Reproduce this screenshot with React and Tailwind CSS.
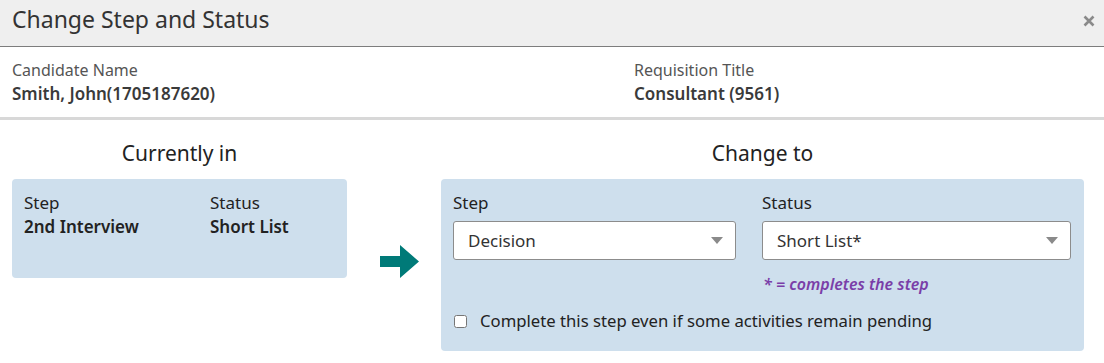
import React, { useState } from "react";

const Caret = () => (
  <svg width="12" height="7" viewBox="0 0 12 7" className="shrink-0">
    <path d="M0 0 H12 L6 7 Z" fill="#8a8a8a" />
  </svg>
);

const SelectBox = ({ value, className }) => (
  <div
    className={`h-[39px] flex items-center justify-between pl-[14px] pr-[12px] bg-white border border-[#8c8c8c] rounded-[3px] text-[17px] text-[#333] ${className}`}
  >
    <span>{value}</span>
    <Caret />
  </div>
);

const App = () => {
  const [pending, setPending] = useState(false);

  return (
    <div className="w-[1104px] h-[363px] bg-white text-[#333] font-['Noto_Sans',sans-serif] overflow-hidden">
      {/* header */}
      <div className="h-[47px] flex items-center justify-between pl-3 pr-[9px] bg-[#efefef] border-b border-[#7d7d7d]">
        <h1 className="text-[23px] leading-[30px] text-[#333] -mt-[9px]">Change Step and Status</h1>
        <button className="w-[12px] h-[12px] -mt-[4px]">
          <svg width="12" height="12" viewBox="0 0 12 12">
            <path d="M1.5 1.5 L10.5 10.5 M10.5 1.5 L1.5 10.5" stroke="#8a8a8a" strokeWidth="2.6" />
          </svg>
        </button>
      </div>

      {/* candidate info */}
      <div className="flex pt-[13px] pb-[11px] border-b-[3px] border-[#d8d8d8]">
        <div className="w-[634px] pl-3">
          <div className="text-[16px] leading-[20px] text-[#555]">Candidate Name</div>
          <div className="mt-[2px] text-[17px] leading-[24px] font-semibold text-[#3a3a3a]">Smith, John(1705187620)</div>
        </div>
        <div>
          <div className="text-[16px] leading-[20px] text-[#555]">Requisition Title</div>
          <div className="mt-[2px] text-[17px] leading-[24px] font-semibold text-[#3a3a3a]">Consultant (9561)</div>
        </div>
      </div>

      {/* step change */}
      <div className="flex pt-[20px] pl-3">
        <div className="w-[335px]">
          <h2 className="text-center text-[21px] leading-[26px] text-[#222] mb-[13px]">Currently in</h2>
          <div className="h-[99px] bg-[#cedfed] rounded-[4px] flex pl-3 pt-3 text-[17px] leading-[24px] text-[#222]">
            <div className="w-[186px]">
              <div>Step</div>
              <div className="font-semibold">2nd Interview</div>
            </div>
            <div>
              <div>Status</div>
              <div className="font-semibold">Short List</div>
            </div>
          </div>
        </div>

        <div className="w-[94px] pt-[105px] pl-[33px]">
          <svg width="39" height="33" viewBox="0 0 39 33">
            <path d="M0 11 H20 V0 L39 16.5 L20 33 V22 H0 Z" fill="#007a78" />
          </svg>
        </div>

        <div className="w-[643px]">
          <h2 className="text-center text-[21px] leading-[26px] text-[#222] mb-[13px]">Change to</h2>
          <div className="bg-[#cedfed] rounded-[4px] pt-3 pl-3 pr-[13px] pb-[18px] text-[17px] leading-[24px] text-[#222]">
            <div className="flex">
              <div className="w-[309px]">
                <div className="mb-[6px]">Step</div>
                <SelectBox value="Decision" className="w-[283px]" />
              </div>
              <div className="w-[309px]">
                <div className="mb-[6px]">Status</div>
                <SelectBox value="Short List*" className="w-[309px]" />
                <div className="mt-[14px] pl-[1px] text-[16px] leading-[20px] italic font-semibold text-[#7a3ea8]">
                  * = completes the step
                </div>
              </div>
            </div>
            <label className="mt-[15px] flex items-center gap-[13px] pl-[1px] cursor-pointer">
              <input
                type="checkbox"
                checked={pending}
                onChange={() => setPending(!pending)}
                className="w-[13px] h-[13px] m-0"
              />
              <span className="text-[16.7px]">Complete this step even if some activities remain pending</span>
            </label>
          </div>
        </div>
      </div>
    </div>
  );
};

export default App;
